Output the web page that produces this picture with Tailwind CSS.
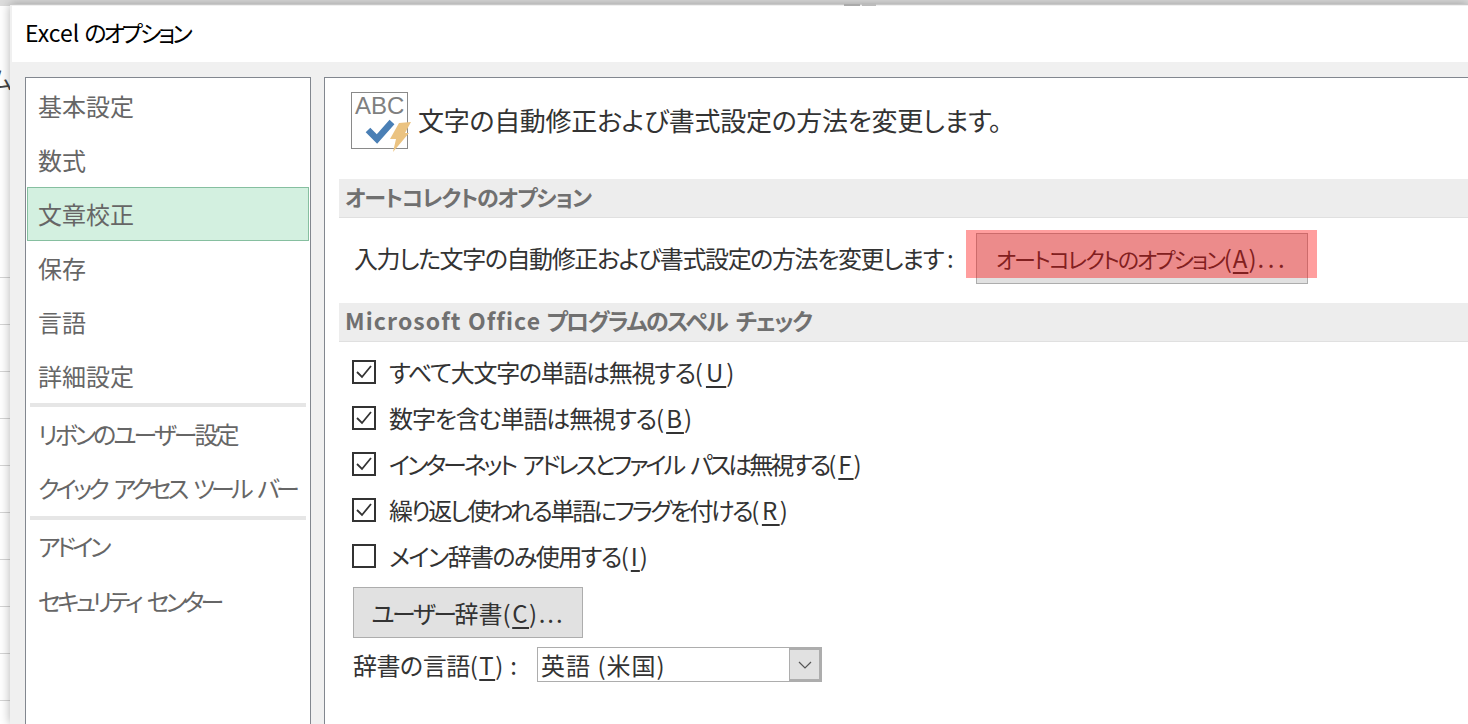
<!DOCTYPE html>
<html lang="ja">
<head>
  <meta charset="UTF-8" />
  <title>Excel のオプション</title>
  <script src="https://cdn.jsdelivr.net/npm/@tailwindcss/browser@4"></script>
</head>
<body class="relative w-[1468px] h-[724px] overflow-hidden bg-white font-['Noto_Sans_CJK_JP','Noto_Sans',sans-serif] [font-feature-settings:'palt'] text-[#333]">

  <!-- Excel sheet behind the dialog -->
  <div class="absolute inset-x-0 top-0 h-[6px] bg-[#dcdcdc]"></div>
  <div class="absolute left-0 top-[64px] text-[24px] leading-[30px] text-[#444] w-[12px] overflow-hidden flex justify-end">ム</div>
  <div class="absolute left-0 top-[277px] w-[10px] flex flex-col gap-[46px]">
    <div class="h-px bg-[#d4d4d4]"></div>
    <div class="h-px bg-[#d4d4d4]"></div>
    <div class="h-px bg-[#d4d4d4]"></div>
    <div class="h-px bg-[#d4d4d4]"></div>
    <div class="h-px bg-[#d4d4d4]"></div>
    <div class="h-px bg-[#d4d4d4]"></div>
    <div class="h-px bg-[#d4d4d4]"></div>
    <div class="h-px bg-[#d4d4d4]"></div>
    <div class="h-px bg-[#d4d4d4]"></div>
    <div class="h-px bg-[#d4d4d4]"></div>
  </div>

  <!-- Dialog -->
  <div class="absolute left-[10px] top-[4px] w-[1458px] h-[720px] bg-[#f0f0f0] border-t border-t-[#c8c8c8] shadow-[0_0_10px_rgba(0,0,0,0.3)] flex flex-col">
    <div class="ml-[2px] mt-[1px] h-[56px] shrink-0 bg-white flex items-center pl-[13px] pb-[3px] text-[23px] text-black whitespace-nowrap">Excel&nbsp;<span class="tracking-[-3px]">のオプション</span></div>

    <div class="flex flex-1 pt-[15px] pl-[15px] gap-[13px] min-h-0">
      <!-- Sidebar -->
      <nav class="w-[286px] shrink-0 bg-white border border-[#82878f] border-b-0 px-[1px] pt-[1px] text-[24px] text-[#666]">
        <div class="h-[54px] flex items-center pl-[11px]">基本設定</div>
        <div class="h-[54px] flex items-center pl-[11px]">数式</div>
        <div class="h-[54px] flex items-center pl-[10px] bg-[#d3f0e0] border border-[#86bfa0]">文章校正</div>
        <div class="h-[54px] flex items-center pl-[11px]">保存</div>
        <div class="h-[54px] flex items-center pl-[11px]">言語</div>
        <div class="h-[54px] flex items-center pl-[11px]">詳細設定</div>
        <div class="mx-[3px] h-[4px] bg-[#e6e6e6]"></div>
        <div class="h-[54px] flex items-center pl-[11px] tracking-[-3px] whitespace-nowrap">リボンのユーザー設定</div>
        <div class="h-[54px] flex items-center pl-[11px] tracking-[-3.8px] [word-spacing:6px] whitespace-nowrap">クイック アクセス ツール バー</div>
        <div class="mx-[3px] h-[4px] mt-[1px] bg-[#e6e6e6]"></div>
        <div class="h-[54px] flex items-center pl-[11px] pb-[2px] tracking-[-3.5px]">アドイン</div>
        <div class="h-[54px] flex items-center pl-[11px] tracking-[-3.7px] [word-spacing:5px] whitespace-nowrap">セキュリティ センター</div>
      </nav>

      <!-- Content -->
      <main class="flex-1 bg-white border border-[#82878f] border-r-0 border-b-0 pl-[14px] text-[24px] min-w-0">
        <div class="h-[101px] flex items-start pt-[14px] pl-[12px] gap-[10px]">
          <div class="relative w-[57px] h-[57px] border border-[#8a8a8a] shrink-0">
            <span class="absolute left-[3px] top-[-3px] font-['Liberation_Sans',sans-serif] text-[24px] leading-[32px] text-[#7f7f7f]">ABC</span>
            <svg class="absolute left-[-1px] top-[-1px] overflow-visible" width="60" height="64" viewBox="0 0 60 64">
              <path d="M17 38 L26 47 L41 30" fill="none" stroke="#4a7fb5" stroke-width="6.5"/>
              <path d="M48 31 L60 30 L54 41 L58 41 L42 60 L45 47 L39 47 Z" fill="#ebc381"/>
            </svg>
          </div>
          <div class="pt-[9px] leading-[38px] text-[26px] tracking-[-0.3px] whitespace-nowrap">文字の自動修正および書式設定の方法を変更します。</div>
        </div>

        <div class="h-[39px] flex items-center pl-[6px] pb-[3px] bg-[#ededed] border-b border-[#e0e0e0] font-bold text-[#707070] text-[22px] tracking-[-1.25px]">オートコレクトのオプション</div>

        <div class="h-[85px] flex items-start pl-[15px] pt-[15px]">
          <span class="w-[622px] shrink-0 leading-[50px] whitespace-nowrap tracking-[-1.4px]">入力した文字の自動修正および書式設定の方法を変更します :</span>
          <button class="relative w-[332px] h-[51px] pb-[2px] bg-[#e1e1e1] border border-[#adadad] text-[#333]">
            <span class="whitespace-nowrap"><span class="text-[22px] tracking-[-2px]">オートコレクトのオプション</span><span class="tracking-[1px]">(<span class="underline underline-offset-4">A</span>)</span><span class="tracking-[3.5px]">...</span></span>
            <span class="absolute left-[-11px] top-[-4px] w-[351px] h-[48px] bg-[#ff0000]/38"></span>
          </button>
        </div>

        <div class="h-[39px] flex items-center pl-[6px] pb-[3px] bg-[#ededed] border-b border-[#e0e0e0] font-bold text-[#707070] text-[23px] whitespace-nowrap"><span class="tracking-[1.1px]">Microsoft Office</span>&nbsp;<span class="tracking-[-1.65px] [word-spacing:5px]">プログラムのスペル チェック</span></div>

        <div class="pl-[13px] pt-[7px] flex flex-col">
          <label class="h-[46px] flex items-center gap-[13px]">
            <svg width="24" height="24" viewBox="0 0 24 24" class="shrink-0"><rect x="1" y="1" width="22" height="22" fill="#fff" stroke="#333" stroke-width="2"/><path d="M5 12 L10 17 L19 6" fill="none" stroke="#333" stroke-width="1.8"/></svg>
            <span class="tracking-[-1.3px] whitespace-nowrap">すべて大文字の単語は無視する<span class="tracking-[3px]">(<span class="underline underline-offset-4">U</span>)</span></span>
          </label>
          <label class="h-[46px] flex items-center gap-[13px]">
            <svg width="24" height="24" viewBox="0 0 24 24" class="shrink-0"><rect x="1" y="1" width="22" height="22" fill="#fff" stroke="#333" stroke-width="2"/><path d="M5 12 L10 17 L19 6" fill="none" stroke="#333" stroke-width="1.8"/></svg>
            <span class="tracking-[-1.1px] whitespace-nowrap">数字を含む単語は無視する<span class="tracking-[2px]">(<span class="underline underline-offset-4">B</span>)</span></span>
          </label>
          <label class="h-[46px] flex items-center gap-[13px]">
            <svg width="24" height="24" viewBox="0 0 24 24" class="shrink-0"><rect x="1" y="1" width="22" height="22" fill="#fff" stroke="#333" stroke-width="2"/><path d="M5 12 L10 17 L19 6" fill="none" stroke="#333" stroke-width="1.8"/></svg>
            <span class="tracking-[-3.07px] [word-spacing:5px] whitespace-nowrap">インターネット アドレスとファイル パスは無視する<span class="tracking-[2px]">(<span class="underline underline-offset-4">F</span>)</span></span>
          </label>
          <label class="h-[46px] flex items-center gap-[13px]">
            <svg width="24" height="24" viewBox="0 0 24 24" class="shrink-0"><rect x="1" y="1" width="22" height="22" fill="#fff" stroke="#333" stroke-width="2"/><path d="M5 12 L10 17 L19 6" fill="none" stroke="#333" stroke-width="1.8"/></svg>
            <span class="tracking-[-2.4px] whitespace-nowrap">繰り返し使われる単語にフラグを付ける<span class="tracking-[2.5px]">(<span class="underline underline-offset-4">R</span>)</span></span>
          </label>
          <label class="h-[46px] flex items-center gap-[13px]">
            <svg width="24" height="24" viewBox="0 0 24 24" class="shrink-0"><rect x="1" y="1" width="22" height="22" fill="#fff" stroke="#333" stroke-width="2"/></svg>
            <span class="tracking-[-1.6px] whitespace-nowrap">メイン辞書のみ使用する<span class="tracking-[2px]">(<span class="underline underline-offset-4">I</span>)</span></span>
          </label>
        </div>

        <button class="block ml-[14px] mt-[8px] w-[230px] h-[51px] bg-[#e1e1e1] border border-[#adadad] text-[#333] whitespace-nowrap"><span class="tracking-[-2.5px]">ユーザー</span>辞書<span class="tracking-[1.5px]">(<span class="underline underline-offset-4">C</span>)</span><span class="tracking-[2px]">...</span></button>

        <div class="ml-[14px] mt-[9px] flex items-center h-[35px]">
          <span class="w-[184px] shrink-0 whitespace-nowrap"><span class="tracking-[-0.5px]">辞書の言語</span><span class="tracking-[1.5px]">(<span class="underline underline-offset-4">T</span>)</span> :</span>
          <div class="w-[285px] h-[35px] flex border border-[#adadad] bg-white">
            <span class="flex-1 pl-[3px] leading-[33px] tracking-[1px]">英語 (米国)</span>
            <span class="w-[32px] bg-[#e1e1e1] border-2 border-[#adadad] border-l-[1px] flex items-center justify-center">
              <svg width="14" height="8" viewBox="0 0 14 8"><path d="M1 1 L7 7 L13 1" fill="none" stroke="#555" stroke-width="1.2"/></svg>
            </span>
          </div>
        </div>
      </main>
    </div>
  </div>

  <!-- scraps of the sheet header showing above the dialog -->
  <div class="absolute left-[844px] top-[4px] w-[16px] h-[2px] bg-[#aaa]"></div>
  <div class="absolute left-[862px] top-[3px] w-[14px] h-[3px] bg-[#bbb]"></div>
</body>
</html>
